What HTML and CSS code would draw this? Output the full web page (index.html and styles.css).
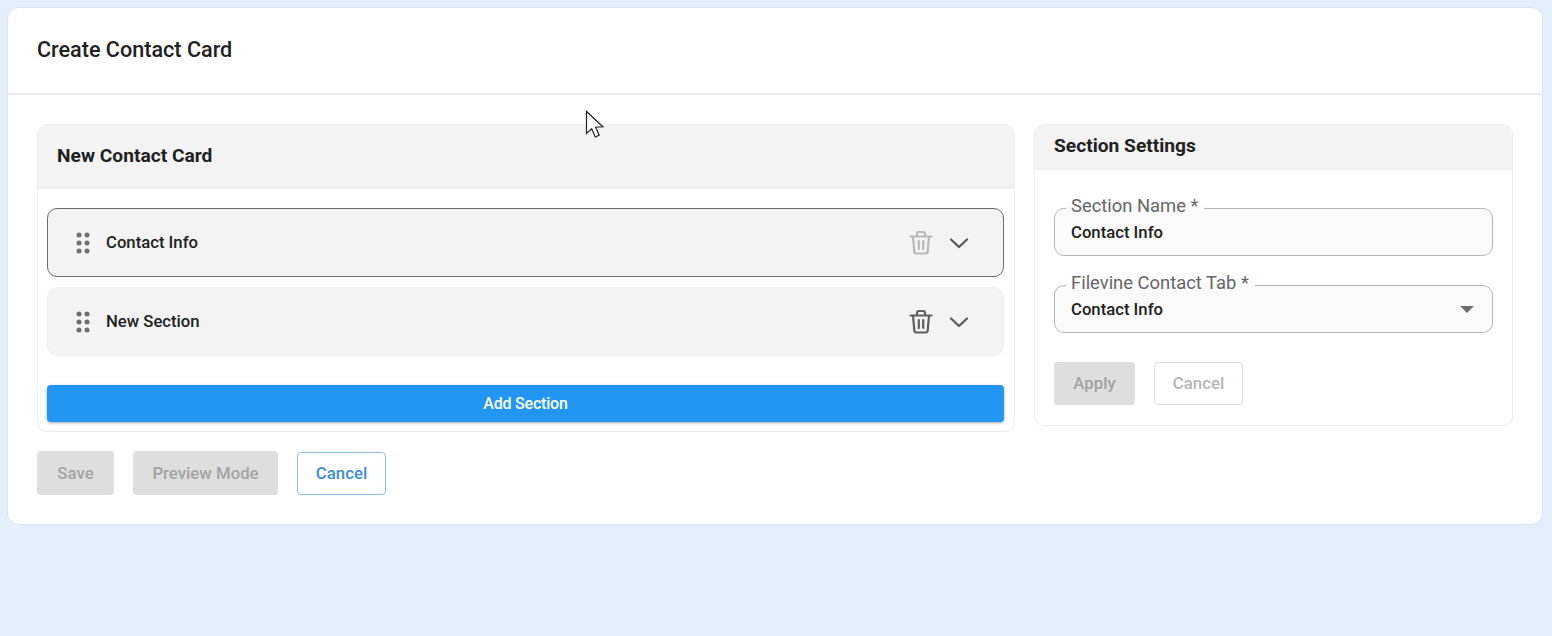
FILE: index.html
```html
<!DOCTYPE html>
<html lang="en">
<head>
<meta charset="utf-8">
<title>Create Contact Card</title>
<link rel="stylesheet" href="styles.css">
</head>
<body>
<main class="card">
  <header class="card-head"><h1>Create Contact Card</h1></header>
  <div class="card-body">
    <div class="columns">
      <section class="panel panel-left">
        <h2 class="panel-head head-tall">New Contact Card</h2>
        <div class="left-body">
          <div class="item item-active">
            <svg class="grip" width="14" height="22" viewBox="0 0 14 22"><g fill="#6e6e6e"><circle cx="3" cy="3" r="2.5"/><circle cx="11" cy="3" r="2.5"/><circle cx="3" cy="11" r="2.5"/><circle cx="11" cy="11" r="2.5"/><circle cx="3" cy="19" r="2.5"/><circle cx="11" cy="19" r="2.5"/></g></svg>
            <span class="item-name">Contact Info</span>
            <svg class="trash trash-off" width="24" height="26" viewBox="0 0 24 26"><path d="M1.500 6.500h21M4 6.500l1.300 15.200a2 2 0 0 0 2 1.800h9.400a2 2 0 0 0 2-1.800L20 6.500M8 6.500V3.800A1.800 1.800 0 0 1 9.800 2h4.400A1.800 1.800 0 0 1 16 3.800v2.700M9.800 11v8M14.200 11v8"/></svg>
            <svg class="chev" width="20" height="12" viewBox="0 0 20 12"><path d="M2 2.500l8 7.500 8-7.500"/></svg>
          </div>
          <div class="item">
            <svg class="grip" width="14" height="22" viewBox="0 0 14 22"><g fill="#6e6e6e"><circle cx="3" cy="3" r="2.5"/><circle cx="11" cy="3" r="2.5"/><circle cx="3" cy="11" r="2.5"/><circle cx="11" cy="11" r="2.5"/><circle cx="3" cy="19" r="2.5"/><circle cx="11" cy="19" r="2.5"/></g></svg>
            <span class="item-name">New Section</span>
            <svg class="trash" width="24" height="26" viewBox="0 0 24 26"><path d="M1.500 6.500h21M4 6.500l1.300 15.200a2 2 0 0 0 2 1.800h9.400a2 2 0 0 0 2-1.800L20 6.500M8 6.500V3.800A1.800 1.800 0 0 1 9.800 2h4.400A1.800 1.800 0 0 1 16 3.800v2.700M9.800 11v8M14.200 11v8"/></svg>
            <svg class="chev" width="20" height="12" viewBox="0 0 20 12"><path d="M2 2.500l8 7.500 8-7.500"/></svg>
          </div>
          <button class="add-btn" type="button">Add Section</button>
        </div>
      </section>
      <section class="panel panel-right">
        <h2 class="panel-head head-short">Section Settings</h2>
        <div class="right-body">
          <div class="field">
            <span class="field-label">Section Name *</span>
            <span class="field-value">Contact Info</span>
          </div>
          <div class="field">
            <span class="field-label">Filevine Contact Tab *</span>
            <span class="field-value">Contact Info</span>
            <svg class="caret" width="14" height="7" viewBox="0 0 14 7"><path d="M0 0h14L7 7z"/></svg>
          </div>
          <div class="btn-row">
            <button class="btn btn-disabled btn-apply" type="button">Apply</button>
            <button class="btn btn-outline-off btn-cancel-right" type="button">Cancel</button>
          </div>
        </div>
      </section>
    </div>
    <div class="btn-row btn-row-main">
      <button class="btn btn-disabled btn-save" type="button">Save</button>
      <button class="btn btn-disabled btn-preview" type="button">Preview Mode</button>
      <button class="btn btn-outline btn-cancel-main" type="button">Cancel</button>
    </div>
  </div>
</main>
<svg class="cursor" width="20" height="30" viewBox="0 0 20 30"><path d="M1.500 1.500v22l5.200-4.800 3.600 8.300 3.900-1.700-3.500-8.100 7.200-.4z"/></svg>
</body>
</html>
```
FILE: styles.css
```css
* { box-sizing: border-box; }
html, body { height: 100%; }
body {
  margin: 0;
  padding: 7px 9px 0 7px;
  background: #e3f0fb;
  font-family: Roboto, "Liberation Sans", sans-serif;
  color: #212121;
  overflow: hidden;
  position: relative;
}
h1, h2 { margin: 0; }
button { font-family: inherit; margin: 0; cursor: pointer; }

.card {
  height: 518px;
  background: #fff;
  border: 1px solid #d6e6f4;
  border-radius: 12px;
}
.card-head {
  height: 87px;
  padding: 0 0 2px 29px;
  display: flex;
  align-items: center;
  border-bottom: 2px solid #e9ecef;
}
.card-head h1 { font-size: 21.600px; font-weight: 500; }
.card-body { padding: 29px 29px 0; }
.columns { display: flex; gap: 19px; align-items: flex-start; }

.panel {
  border: 1px solid #eeeeee;
  border-radius: 10px;
  overflow: hidden;
  background: #fff;
}
.panel-left { width: 978px; height: 308px; }
.panel-right { width: 479px; height: 302px; }
.panel-head {
  background: #f3f3f3;
  font-weight: 700;
  font-size: 19.200px;
  display: flex;
  align-items: center;
  padding-left: 19px;
}
.head-tall { height: 64px; border-bottom: 3px solid #efefef; }
.head-short { height: 45px; padding-bottom: 4px; border-bottom: 1px solid #ececec; }

.left-body {
  padding: 19px 10px 0 9px;
  display: flex;
  flex-direction: column;
  gap: 10px;
}
.item {
  height: 69px;
  background: #f3f3f3;
  border: 1px solid #f0f0f0;
  border-radius: 10px;
  display: flex;
  align-items: center;
  padding: 0 34px 0 28px;
}
.item-active { border-color: #6b6b6b; }
.grip { flex: none; }
.item-name {
  margin-left: 16px;
  font-size: 16.700px;
  font-weight: 500;
  flex: 1;
}
.trash { flex: none; margin-right: 16px; }
.trash path { fill: none; stroke: #5f5f5f; stroke-width: 2.200; stroke-linecap: round; stroke-linejoin: round; }
.trash-off path { stroke: #b9b9b9; }
.chev { flex: none; }
.chev path { fill: none; stroke: #5a5a5a; stroke-width: 2.300; stroke-linecap: round; stroke-linejoin: round; }

.add-btn {
  margin-top: 19px;
  height: 37px;
  border: 0;
  border-radius: 4px;
  background: #2196f3;
  color: #fff;
  font-size: 16px;
  font-weight: 500;
  letter-spacing: -0.2px;
  box-shadow: 0 1px 3px rgba(0, 0, 0, .35);
}

.right-body {
  padding: 38px 19px 0;
  display: flex;
  flex-direction: column;
  gap: 29px;
}
.field {
  position: relative;
  height: 48px;
  background: #fafafa;
  border: 1px solid #b5b5b5;
  border-radius: 10px;
  display: flex;
  align-items: center;
  padding-left: 16px;
}
.field-label {
  position: absolute;
  top: -13px;
  left: 11px;
  padding: 0 6px 0 5px;
  background: linear-gradient(#fff 50%, #fafafa 50%);
  color: #666;
  font-size: 18.400px;
  line-height: 20px;
}
.field-value { font-size: 16.700px; font-weight: 500; }
.caret { position: absolute; right: 18px; top: 20px; }
.caret path { fill: #707070; }

.btn-row { display: flex; gap: 19px; align-items: flex-end; }
.btn-row-main { margin-top: 19px; }
.btn {
  border-radius: 4px;
  font-size: 16.800px;
  font-weight: 500;
  padding: 0 0 2px;
}
.btn-disabled { background: #dedede; border: 0; color: #a3a3a3; }
.btn-outline-off { background: #fff; border: 1px solid #dedede; color: #b5b5b5; }
.btn-outline { background: #fff; border: 1px solid #8fbfe3; color: #3a8ddb; }
.btn-apply { width: 81px; height: 43px; }
.btn-cancel-right { width: 89px; height: 43px; }
.btn-save { width: 77px; height: 44px; padding: 0; }
.btn-preview { width: 145px; height: 44px; padding: 0; }
.btn-cancel-main { width: 89px; height: 43px; }

.cursor { position: absolute; left: 585px; top: 110px; }
.cursor path { fill: #fff; stroke: #222; stroke-width: 1.200; stroke-linejoin: miter; }
```
